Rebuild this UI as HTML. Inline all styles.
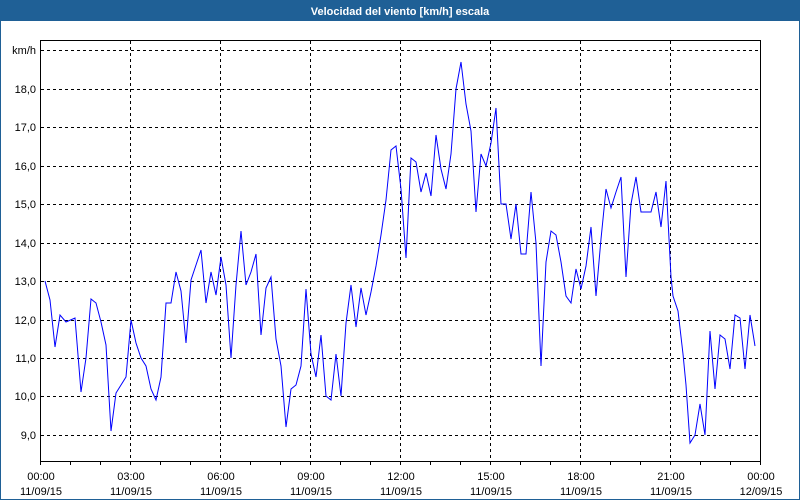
<!DOCTYPE html>
<html><head><style>
html,body{margin:0;padding:0;background:#fff}
svg{display:block}
text{font-family:"Liberation Sans",sans-serif;font-size:11px;fill:#000}
</style></head><body>
<svg width="800" height="500" viewBox="0 0 800 500" xmlns="http://www.w3.org/2000/svg">
<rect x="0.5" y="0.5" width="799" height="499" fill="#fff" stroke="#1f6096"/>
<rect x="0" y="0" width="800" height="21" fill="#1f6096"/>
<text x="400" y="15" text-anchor="middle" style="font-weight:bold;fill:#fff">Velocidad del viento [km/h] escala</text>
<g stroke="#000" stroke-dasharray="3,3" stroke-width="1">
<path d="M41 50.5H760M41 89.5H760M41 127.5H760M41 166.5H760M41 204.5H760M41 243.5H760M41 281.5H760M41 320.5H760M41 358.5H760M41 396.5H760M41 435.5H760"/>
<path d="M130.5 41V461M220.5 41V461M310.5 41V461M400.5 41V461M490.5 41V461M580.5 41V461M670.5 41V461"/>
</g>
<path d="M40.5 461V40.5H760.5V461.5H40.5" fill="none" stroke="#000"/>
<path d="M70.5 461v4M100.5 461v4M130.5 461v4M160.5 461v4M190.5 461v4M220.5 461v4M250.5 461v4M280.5 461v4M310.5 461v4M340.5 461v4M370.5 461v4M400.5 461v4M430.5 461v4M460.5 461v4M490.5 461v4M520.5 461v4M550.5 461v4M580.5 461v4M610.5 461v4M640.5 461v4M670.5 461v4M700.5 461v4M730.5 461v4M760.5 461v4M40.5 461v4" stroke="#000"/>
<g text-anchor="end">
<text x="36" y="54">km/h</text>
<text x="36" y="93">18,0</text><text x="36" y="131">17,0</text><text x="36" y="170">16,0</text>
<text x="36" y="208">15,0</text><text x="36" y="247">14,0</text><text x="36" y="285">13,0</text>
<text x="36" y="324">12,0</text><text x="36" y="362">11,0</text><text x="36" y="400">10,0</text>
<text x="36" y="439">9,0</text>
</g>
<g text-anchor="middle">
<text x="41" y="480">00:00</text><text x="41" y="495">11/09/15</text>
<text x="131" y="480">03:00</text><text x="131" y="495">11/09/15</text>
<text x="221" y="480">06:00</text><text x="221" y="495">11/09/15</text>
<text x="311" y="480">09:00</text><text x="311" y="495">11/09/15</text>
<text x="401" y="480">12:00</text><text x="401" y="495">11/09/15</text>
<text x="491" y="480">15:00</text><text x="491" y="495">11/09/15</text>
<text x="581" y="480">18:00</text><text x="581" y="495">11/09/15</text>
<text x="671" y="480">21:00</text><text x="671" y="495">11/09/15</text>
<text x="761" y="480">00:00</text><text x="761" y="495">12/09/15</text>
</g>
<polyline fill="none" stroke="#0000ff" stroke-width="1" points="45,281 50,300 55,347 60,315 66,322 75,318 81,392 86,358 91,299 96,303 101,322 106,345 111,431 116,393 121,385 126,377 131,320 136,343 141,358 146,366 151,389 156,400 161,377 166,303 171,303 176,272 181,291 186,343 191,280 196,265 201,250 206,303 211,272 216,295 221,257 226,285 231,358 236,285 241,231 246,285 251,272 256,254 261,335 266,288 271,277 276,339 281,366 286,427 291,389 296,385 301,366 306,289 311,354 316,377 321,335 326,396 331,400 336,354 341,396 346,323 351,285 356,327 361,288 366,315 371,292 376,266 381,235 386,200 391,150 396,146 401,189 406,258 411,158 416,162 421,192 426,173 431,196 436,135 441,169 446,189 451,154 456,89 461,62 466,104 471,131 476,212 481,154 486,166 491,143 496,108 501,204 506,204 511,239 516,204 521,254 526,254 531,192 536,243 541,366 546,262 551,231 556,235 561,262 566,296 571,303 576,269 581,289 586,266 591,227 596,296 601,239 606,189 611,208 616,192 621,177 626,277 631,204 636,177 641,212 646,212 651,212 656,192 661,227 666,181 671,277 673,296 678,311 683,354 686,385 690,443 695,435 700,404 705,435 710,331 715,389 720,335 725,339 730,369 735,315 740,318 745,369 750,315 755,346"/>
</svg>
</body></html>
